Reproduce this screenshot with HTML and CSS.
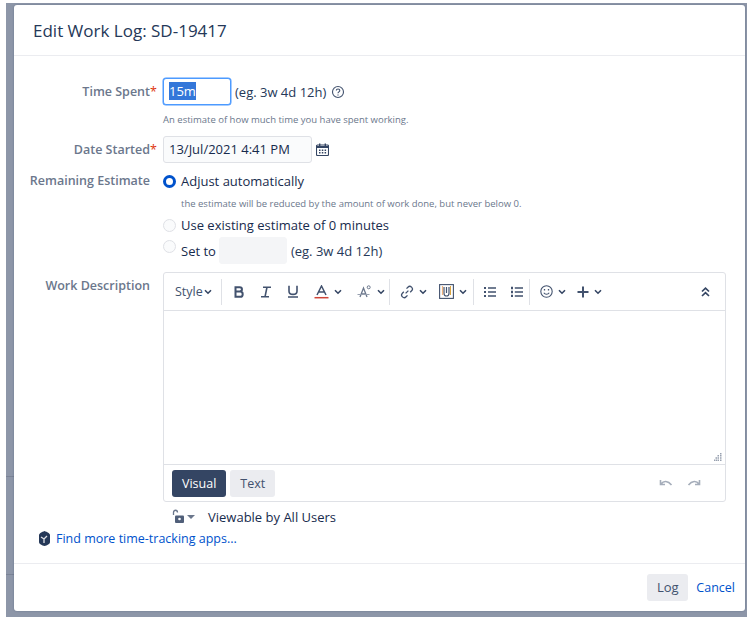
FILE: index.html
```html
<!DOCTYPE html>
<html lang="en">
<head>
    <meta charset="UTF-8">
    <meta name="viewport" content="width=device-width, initial-scale=1.0">
    <title>Edit Work Log: SD-19417</title>
    <link rel="stylesheet" href="styles.css">
</head>
<body>
    <div class="backdrop">
        <div class="dialog">
            <header class="dialog-header">
                <h1>Edit Work Log: SD-19417</h1>
            </header>

            <form class="dialog-body">
                <div class="row row-time">
                    <label class="field-label">Time Spent<span class="req">*</span></label>
                    <div class="field">
                        <div class="line">
                            <div class="input input-time"><span class="selected">15m</span></div>
                            <span class="eg">(eg. 3w 4d 12h)</span>
                            <svg class="help" width="14" height="14" viewBox="0 0 14 14" fill="none" stroke="#42526e">
                                <circle cx="7" cy="7" r="5.5" stroke-width="1.1"/>
                                <path d="M5.3 5.6c0-2.2 3.5-2.2 3.5 0 0 1.3-1.8 1.3-1.8 2.6" stroke-width="1.1"/>
                                <path d="M7 9.4v1.2" stroke-width="1.2"/>
                            </svg>
                        </div>
                        <p class="hint hint-time">An estimate of how much time you have spent working.</p>
                    </div>
                </div>

                <div class="row row-date">
                    <label class="field-label">Date Started<span class="req">*</span></label>
                    <div class="line">
                        <div class="input input-date">13/Jul/2021 4:41 PM</div>
                        <svg class="cal" width="13" height="13" viewBox="0 0 13 13">
                            <path d="M1.5 2h10a1 1 0 0 1 1 1v8.5a1 1 0 0 1-1 1h-10a1 1 0 0 1-1-1V3a1 1 0 0 1 1-1z" fill="none" stroke="#344563" stroke-width="1.1"/>
                            <path d="M3 .5h1.4V3H3zM8.6 .5H10V3H8.6zM1 3h11v2H1z" fill="#344563"/>
                            <path d="M3 6.5h1.5V8H3zM5.8 6.5h1.5V8H5.8zM8.6 6.5h1.5V8H8.6zM3 9h1.5v1.5H3zM5.8 9h1.5v1.5H5.8zM8.6 9h1.5v1.5H8.6z" fill="#344563"/>
                        </svg>
                    </div>
                </div>

                <div class="row row-remaining">
                    <label class="field-label">Remaining Estimate</label>
                    <div class="field">
                        <div class="radio-line">
                            <span class="radio radio-on"></span>
                            <span>Adjust automatically</span>
                        </div>
                        <p class="hint hint-radio">the estimate will be reduced by the amount of work done, but never below 0.</p>
                        <div class="radio-line radio-existing">
                            <span class="radio"></span>
                            <span>Use existing estimate of 0 minutes</span>
                        </div>
                        <div class="radio-line radio-set">
                            <span class="radio"></span>
                            <span>Set to</span>
                            <div class="input input-set"></div>
                            <span class="eg">(eg. 3w 4d 12h)</span>
                        </div>
                    </div>
                </div>

                <div class="row row-desc">
                    <label class="field-label">Work Description</label>
                    <div class="editor">
                        <div class="toolbar">
                            <div class="tool-group group-style">
                                <span class="style-btn">Style</span>
                                <svg class="chev" width="8" height="6" viewBox="0 0 8 6"><path d="M1 1.2l3 3 3-3"/></svg>
                            </div>
                            <div class="tool-group group-text">
                                <svg width="12" height="12" viewBox="0 0 12 12" fill="none" stroke="#42526e" stroke-width="2"><path d="M2.5 1.2h4.2c3 0 3 4.3 0 4.3H2.5h4.8c3.2 0 3.2 5.3 0 5.3H2.5z"/></svg>
                                <svg width="12" height="12" viewBox="0 0 12 12" fill="none" stroke="#42526e" stroke-width="1.5"><path d="M3 1.2h8M1 10.8h8M7 1.2L5 10.8" stroke-width="1.6"/></svg>
                                <svg width="12" height="13" viewBox="0 0 12 13" fill="none" stroke="#42526e" stroke-width="1.6"><path d="M2 .8v5.4c0 4.2 8 4.2 8 0V.8M1 12h10"/></svg>
                                <span class="pair">
                                    <svg width="15" height="14" viewBox="0 0 15 14" fill="none"><path d="M3 10L7.5 1 12 10M4.6 7h5.8" stroke="#42526e" stroke-width="1.5"/><path d="M.5 12.7h14" stroke="#d04437" stroke-width="1.5"/></svg>
                                    <svg class="chev" width="8" height="6" viewBox="0 0 8 6"><path d="M1 1.2l3 3 3-3"/></svg>
                                </span>
                                <span class="pair">
                                    <svg width="15" height="14" viewBox="0 0 15 14" fill="none"><path d="M3 12L6.5 3 10 12M4.2 9h4.6" stroke="#6b778c" stroke-width="1.3"/><path d="M.5 9.5h12" stroke="#97a0af" stroke-width="1"/><circle cx="11.7" cy="2.3" r="1.5" stroke="#6b778c"/></svg>
                                    <svg class="chev" width="8" height="6" viewBox="0 0 8 6"><path d="M1 1.2l3 3 3-3"/></svg>
                                </span>
                            </div>
                            <div class="tool-group group-insert">
                                <span class="pair">
                                    <svg width="14" height="14" viewBox="0 0 14 14" fill="none" stroke="#42526e" stroke-width="1.3"><path d="M5.6 8.4l2.8-2.8M6.5 3.6l1.4-1.4a2.5 2.5 0 0 1 3.7 3.6L10.200 7.200M7.500 10.400l-1.400 1.400a2.500 2.500 0 0 1-3.700-3.600L3.800 6.800"/></svg>
                                    <svg class="chev" width="8" height="6" viewBox="0 0 8 6"><path d="M1 1.2l3 3 3-3"/></svg>
                                </span>
                                <span class="pair">
                                    <svg width="15" height="15" viewBox="0 0 15 15" fill="none"><rect x=".6" y=".6" width="13.800" height="13.800" fill="#fff" stroke="#42526e" stroke-width="1.100"/><path d="M5 3v6.500a2.500 2.500 0 0 0 5 0V3M7.500 3v6" stroke="#42526e" stroke-width="1.200"/><path d="M3.500 2v9" stroke="#f0b37e" stroke-width="1.200"/><path d="M11.500 2v9" stroke="#d9a441" stroke-width="1"/></svg>
                                    <svg class="chev" width="8" height="6" viewBox="0 0 8 6"><path d="M1 1.2l3 3 3-3"/></svg>
                                </span>
                            </div>
                            <div class="tool-group group-list">
                                <svg width="12" height="11" viewBox="0 0 12 11" fill="#42526e"><path d="M0 1h2v2H0zM0 5h2v2H0zM0 9h2v2H0zM4 1.300h8v1.400H4zM4 5.300h8v1.400H4zM4 9.300h8v1.400H4z"/></svg>
                                <svg width="12" height="11" viewBox="0 0 12 11" fill="#42526e"><path d="M0 .8h2v2.400H0zM0 4.800h2v2.400H0zM0 8.800h2v2.400H0zM3.800 1.200h8.200v1.600H3.800zM3.800 5.200h8.200v1.600H3.800zM3.800 9.200h8.200v1.600H3.800z"/></svg>
                            </div>
                            <div class="tool-group group-more">
                                <span class="pair">
                                    <svg width="13" height="13" viewBox="0 0 13 13" fill="none" stroke="#42526e" stroke-width="1.100"><circle cx="6.500" cy="6.500" r="5.700"/><path d="M3.800 7.800c1.200 2 4.200 2 5.400 0"/><path d="M4.500 4v1.500M8.500 4v1.500" stroke-width="1.300"/></svg>
                                    <svg class="chev" width="8" height="6" viewBox="0 0 8 6"><path d="M1 1.2l3 3 3-3"/></svg>
                                </span>
                                <span class="pair">
                                    <svg width="12" height="12" viewBox="0 0 12 12" stroke="#42526e" stroke-width="2"><path d="M6 .5v11M.5 6h11"/></svg>
                                    <svg class="chev" width="8" height="6" viewBox="0 0 8 6"><path d="M1 1.2l3 3 3-3"/></svg>
                                </span>
                            </div>
                            <svg class="collapse" width="9" height="10" viewBox="0 0 9 10" fill="none" stroke="#344563" stroke-width="1.700"><path d="M1 4.500l3.500-3.300L8 4.500M1 9l3.500-3.300L8 9"/></svg>
                        </div>
                        <div class="edit-area">
                            <svg class="grip" width="8" height="8" viewBox="0 0 8 8" fill="#97a0af"><path d="M6 0h1.500v1.500H6zM6 2h1.500v1.500H6zM3.500 2H5v1.500H3.500zM6 4.200h1.500v1.500H6zM3.500 4.200H5v1.500H3.500zM1.500 4.200H3v1.500H1.500zM6 6.400h1.500V8H6zM3.500 6.400H5V8H3.500zM1.500 6.400H3V8H1.500zM0 6.400h1V8H0z"/></svg>
                        </div>
                        <div class="editor-foot">
                            <span class="tab tab-on">Visual</span>
                            <span class="tab">Text</span>
                            <div class="undo-redo">
                                <svg width="14" height="8" viewBox="0 0 14 8" fill="none" stroke="#a5adba" stroke-width="1.600"><path d="M1.500 1v4.500H6M2 5c2.500-3.500 7-3.500 10.500 1"/></svg>
                                <svg width="14" height="8" viewBox="0 0 14 8" fill="none" stroke="#a5adba" stroke-width="1.600"><path d="M12.500 1v4.500H8M12 5C9.500 1.500 5 1.500 1.500 6"/></svg>
                            </div>
                        </div>
                    </div>
                </div>

                <div class="viewable">
                    <svg width="13" height="15" viewBox="0 0 13 15" fill="none"><path d="M1.500 6V3.500c0-3 4-3 4 0" stroke="#6b778c" stroke-width="1.300"/><rect x="3" y="6.500" width="9" height="7.500" rx="1" fill="#505f79"/><circle cx="7.500" cy="10" r="1.300" fill="#fff"/></svg>
                    <svg class="caret" width="8" height="4" viewBox="0 0 8 4"><path d="M0 0h8L4 4z" fill="#6b778c"/></svg>
                    <span>Viewable by All Users</span>
                </div>

                <div class="more-apps">
                    <svg width="11" height="15" viewBox="0 0 11 15"><path d="M5.500 0C8 1 11 2.500 11 4v7c0 2-3 3.500-5.500 4C3 14.500 0 13 0 11V4c0-1.500 3-3 5.500-4z" fill="#253858"/><path d="M2 6l3 2 3-3M5 8v4" stroke="#dfe1e6" stroke-width="1.300" fill="none"/></svg>
                    <a href="#">Find more time-tracking apps...</a>
                </div>
            </form>

            <footer class="dialog-footer">
                <span class="btn-log">Log</span>
                <a href="#" class="cancel">Cancel</a>
            </footer>
        </div>
    </div>
</body>
</html>
```

FILE: styles.css
```css
body {
    margin: 0;
    font-family: "Open Sans", sans-serif;
    font-size: 13px;
    color: #172b4d;
    background-color: white;
}
p {
    margin: 0;
}
svg {
    display: block;
    flex: none;
}
.backdrop {
    width: 741px;
    height: 614px;
    margin: 3px 0 0 6px;
    padding: 2px 2px 6px 8px;
    box-sizing: border-box;
    background-color: #8d96a8;
    background-image:
        linear-gradient(#7a8396, #7a8396),
        linear-gradient(#7a8396, #7a8396);
    background-size: 8px 1px;
    background-repeat: no-repeat;
    background-position: 0 473px, 0 571px;
}
.dialog {
    height: 100%;
    display: flex;
    flex-direction: column;
    background-color: white;
    border-radius: 3px;
    box-shadow: 0 0 2px rgba(9, 30, 66, 0.3);
}
.dialog-header {
    height: 51px;
    box-sizing: border-box;
    flex: none;
    display: flex;
    align-items: center;
    padding-left: 19px;
    border-bottom: 1px solid #ebecf0;
}
.dialog-header h1 {
    margin: 0;
    font-size: 17px;
    font-weight: 400;
    color: #253858;
}
.dialog-body {
    flex: 1;
    padding-top: 22px;
}
.dialog-footer {
    height: 47px;
    flex: none;
    display: flex;
    align-items: center;
    justify-content: flex-end;
    padding-right: 10px;
    gap: 8px;
    border-top: 1px solid #ebecf0;
}

.row {
    display: flex;
}
.field-label {
    width: 136px;
    flex: none;
    margin-right: 13px;
    text-align: right;
    font-weight: 600;
    font-size: 12.5px;
    color: #6b778c;
    white-space: nowrap;
}
.req {
    color: #de350b;
    font-weight: 400;
    position: absolute;
}
.line {
    display: flex;
    align-items: center;
    gap: 4px;
}
.input {
    height: 27px;
    box-sizing: border-box;
    border: 1px solid #dfe1e6;
    border-radius: 3px;
    background-color: #fafbfc;
    line-height: 25px;
    padding-left: 5px;
}
.input-time {
    width: 68px;
    background-color: white;
    border-color: #4c9aff;
    box-shadow: 0 0 0 0.5px #4c9aff;
}
.selected {
    background-color: #3477d9;
    color: white;
}
.input-date {
    width: 149px;
}
.input-set {
    width: 68px;
    border-color: #f4f5f7;
    background-color: #f4f5f7;
}
.eg {
    color: #253858;
}
.help {
    margin-left: 1px;
}
.cal {
    margin-left: 0;
}
.hint {
    font-size: 9.5px;
    color: #6b778c;
}
.hint-time {
    margin-top: 8px;
}
.row-time .field-label,
.row-date .field-label {
    padding-top: 5px;
}
.row-date {
    margin-top: 10px;
}
.row-remaining {
    margin-top: 9px;
}
.row-remaining .field-label {
    line-height: 18px;
}
.radio-line {
    display: flex;
    align-items: center;
    gap: 5px;
    height: 18px;
}
.radio {
    width: 13px;
    height: 13px;
    box-sizing: border-box;
    border: 1px solid #dfe1e6;
    border-radius: 50%;
    background-color: #fafbfc;
}
.radio-on {
    border: 3.5px solid #0052cc;
    background-color: white;
}
.hint-radio {
    margin: 7px 0 0 18px;
}
.radio-existing {
    margin-top: 6px;
}
.radio-set {
    margin-top: 3px;
    height: 27px;
    gap: 5px;
}
.radio-set .radio {
    margin-top: -9px;
}
.radio-set .input {
    margin: 0 -1px 0 -2px;
}

.row-desc {
    margin-top: 8px;
}
.row-desc .field-label {
    padding-top: 5px;
}
.editor {
    width: 563px;
    height: 230px;
    box-sizing: border-box;
    display: flex;
    flex-direction: column;
    border: 1px solid #dfe1e6;
    border-radius: 3px;
}
.toolbar {
    height: 37px;
    flex: none;
    display: flex;
    align-items: center;
    border-bottom: 1px solid #dfe1e6;
    color: #42526e;
}
.tool-group {
    height: 26px;
    display: flex;
    align-items: center;
    border-right: 1px solid #dfe1e6;
}
.chev {
    fill: none;
    stroke: #344563;
    stroke-width: 1.6;
}
.pair {
    display: flex;
    align-items: center;
    gap: 5px;
}
.group-style {
    width: 58px;
    padding-left: 11px;
    box-sizing: border-box;
    gap: 1px;
}
.style-btn {
    font-size: 12.5px;
}
.group-text {
    width: 168px;
    box-sizing: border-box;
    padding-left: 11px;
    gap: 15px;
}
.group-insert {
    width: 84px;
    box-sizing: border-box;
    padding-left: 10px;
    gap: 12px;
}
.group-list {
    width: 56px;
    box-sizing: border-box;
    padding-left: 10px;
    gap: 15px;
}
.group-more {
    border-right: none;
    padding-left: 10px;
    gap: 11px;
}
.collapse {
    margin-left: auto;
    margin-right: 15px;
}
.edit-area {
    flex: 1;
    display: flex;
    align-items: flex-end;
    justify-content: flex-end;
    padding: 0 3px 3px 0;
    border-bottom: 1px solid #dfe1e6;
}
.editor-foot {
    height: 36px;
    flex: none;
    display: flex;
    align-items: center;
    padding-left: 8px;
    gap: 4px;
}
.tab {
    height: 27px;
    line-height: 27px;
    padding: 0 10px;
    border-radius: 3px;
    background-color: #ebecf0;
    color: #42526e;
    font-size: 12.5px;
}
.tab-on {
    background-color: #344563;
    color: white;
}
.undo-redo {
    margin-left: auto;
    margin-right: 24px;
    display: flex;
    gap: 14px;
}
.viewable {
    display: flex;
    align-items: center;
    margin: 7px 0 0 158px;
    height: 15px;
}
.viewable .caret {
    margin-left: 2px;
}
.viewable span {
    margin-left: 13px;
}
.more-apps {
    display: flex;
    align-items: center;
    gap: 6px;
    margin: 6px 0 0 25px;
}
.more-apps a,
.cancel {
    color: #0052cc;
    text-decoration: none;
}
.more-apps a {
    font-size: 12.5px;
}
.btn-log {
    width: 41px;
    height: 27px;
    line-height: 27px;
    text-align: center;
    border-radius: 3px;
    background-color: #ebecf0;
    color: #42526e;
}
.cancel {
    font-size: 12.5px;
}
```
